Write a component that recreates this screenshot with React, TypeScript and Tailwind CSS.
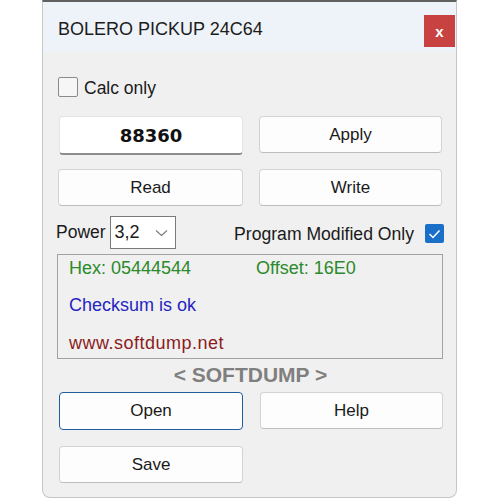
import React from "react";

const font = { fontFamily: '"Liberation Sans", Arial, sans-serif' };

function WinButton({
  label,
  focused = false,
}: {
  label: string;
  focused?: boolean;
}) {
  return (
    <button
      type="button"
      className={
        focused
          ? "h-[38px] w-full rounded-[4px] border-[1.5px] border-[#1e5e9e] bg-[#fdfdfd] text-[17px] text-[#1a1a1a]"
          : "h-[37px] w-full rounded-[4px] border border-[#d3d3d3] border-b-[#bdbdbd] bg-[#fdfdfd] text-[17px] text-[#1a1a1a]"
      }
    >
      {label}
    </button>
  );
}

export default function App() {
  return (
    <div className="w-[500px] h-[500px] bg-white" style={font}>
      <div className="ml-[42px] w-[415px] h-[498px] flex flex-col border-x border-b border-[#c6c6c6] border-t-2 border-t-[#606060] rounded-b-[8px] bg-[#f0f0f0] overflow-hidden">
        {/* title bar */}
        <div className="h-[50px] shrink-0 flex items-start justify-between bg-[#eef3f9]">
          <span className="mt-[15px] ml-[15px] text-[18px] leading-[24px] text-[#1c1c1c]">
            BOLERO PICKUP 24C64
          </span>
          <div className="mt-[13px] mr-[1px] w-[31px] h-[32px] bg-[#c94242] flex items-center justify-center">
            <span className="text-white font-bold text-[15px] leading-none">x</span>
          </div>
        </div>

        <div className="flex flex-col pl-[15px] pr-[13px]">
          {/* calc only */}
          <label className="mt-[25px] h-[20px] flex items-center gap-[6px]">
            <span className="w-[20px] h-[20px] border border-[#8a8a8a] rounded-[2px] bg-[#f6f6f6]" />
            <span className="text-[17.5px] pt-[3px] text-[#1a1a1a]">Calc only</span>
          </label>

          {/* row 1 */}
          <div className="mt-[19px] grid grid-cols-[185px_183px] gap-x-[16px]">
            <div className="h-[39px] ml-[1px] rounded-[4px] border border-[#e4e4e4] border-b-2 border-b-[#8c8c8c] bg-white flex items-center justify-center">
              <span
                className="font-bold text-[18px] text-[#111]"
                style={{ fontFamily: '"DejaVu Sans", Verdana, sans-serif' }}
              >
                88360
              </span>
            </div>
            <WinButton label="Apply" />
          </div>

          {/* row 2 */}
          <div className="mt-[14px] grid grid-cols-[185px_183px] gap-x-[16px]">
            <WinButton label="Read" />
            <WinButton label="Write" />
          </div>

          {/* row 3 */}
          <div className="mt-[10px] flex items-center justify-between">
            <div className="flex items-center gap-[4px] -ml-[2px]">
              <span className="text-[17.5px] text-[#1a1a1a]">Power</span>
              <div className="w-[66px] h-[33px] border border-[#7a7a7a] bg-white flex items-center justify-between pl-[4px] pr-[7px]">
                <span className="text-[18px] text-[#1a1a1a]">3,2</span>
                <svg width="13" height="8" viewBox="0 0 13 8" fill="none">
                  <path d="M1 1.5l5.5 5 5.5-5" stroke="#7a7a7a" strokeWidth="1.1" />
                </svg>
              </div>
            </div>
            <div className="flex items-center gap-[11px] mr-[-1px] mt-[3px]">
              <span className="text-[17.6px] text-[#1a1a1a]">Program Modified Only</span>
              <span className="w-[19px] h-[19px] rounded-[2px] bg-[#1a6fc8] flex items-center justify-center">
                <svg width="13" height="10" viewBox="0 0 13 10" fill="none">
                  <path d="M1.5 5l3.5 3.5 6.5-7" stroke="white" strokeWidth="1.5" />
                </svg>
              </span>
            </div>
          </div>

          {/* info box */}
          <div className="mt-[5px] -ml-[1px] w-[386px] h-[105px] border border-[#a2a2a2] bg-[#f0f0f0] flex flex-col pl-[11px] text-[18px]">
            <div className="h-[26px] flex items-center text-[#2b8a2b]">
              <span className="w-[187px]">Hex: 05444544</span>
              <span>Offset: 16E0</span>
            </div>
            <div className="h-[48px] flex items-center text-[#2525c0]">Checksum is ok</div>
            <div className="h-[28px] flex items-center text-[#8b1c1c] tracking-[0.5px]">
              www.softdump.net
            </div>
          </div>

          {/* brand */}
          <div className="h-[32px] flex items-center justify-center">
            <span className="font-bold text-[21px] text-[#7f7f7f]">&lt; SOFTDUMP &gt;</span>
          </div>

          {/* row 4 */}
          <div className="mt-[1px] grid grid-cols-[184px_183px] gap-x-[17px] ml-[1px]">
            <WinButton label="Open" focused />
            <WinButton label="Help" />
          </div>

          {/* row 5 */}
          <div className="mt-[16px] grid grid-cols-[184px_183px] gap-x-[17px] ml-[1px]">
            <WinButton label="Save" />
          </div>
        </div>
      </div>
    </div>
  );
}
